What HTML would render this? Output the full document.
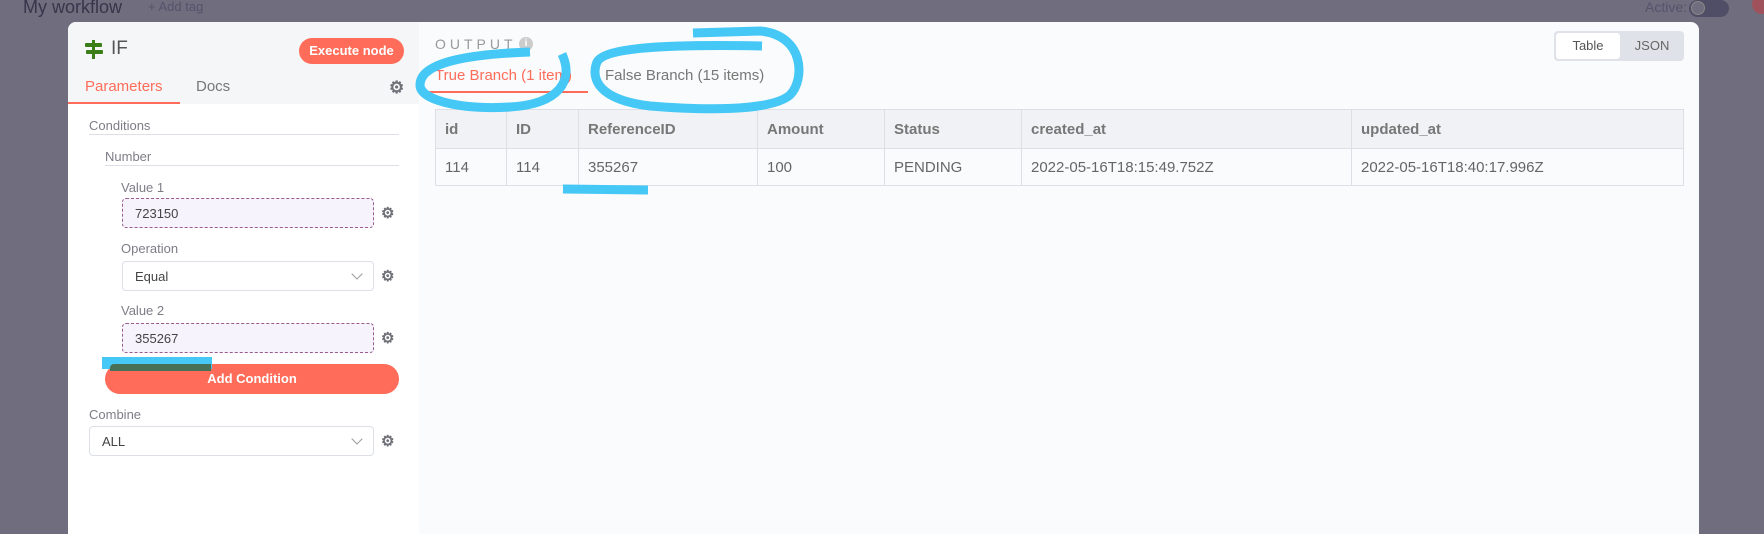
<!DOCTYPE html>
<html style="width:1764px;height:534px;overflow:hidden"><head><meta charset="utf-8"><style>
*{box-sizing:border-box;margin:0;padding:0}
body{width:1764px;height:534px;overflow:hidden;background:#706d7f;font-family:"Liberation Sans",sans-serif;position:relative;color:#555}
.a{position:absolute}
.lbl{position:absolute;font-size:13px;color:#7d7d87}
.inp{position:absolute;border:1px dashed #9a5c8c;background:#f6f3fd;border-radius:4px;font-size:13px;color:#444;padding:7px 12px}
.sel{position:absolute;border:1px solid #dcdfe6;background:#fff;border-radius:4px;font-size:13px;color:#444;padding:7px 12px}
.chev{position:absolute;right:12px;top:8px;width:8px;height:8px;border-right:1px solid #999;border-bottom:1px solid #999;transform:rotate(45deg)}
.gear{position:absolute;font-size:15px;color:#6f6f78;font-weight:bold}
table{border-collapse:collapse;font-size:15px}
td,th{border:1px solid #dcdfe6;padding:0 9px;text-align:left;color:#666}
th{background:#f1f2f5;height:39px;font-weight:bold;color:#777}
td{height:37px;background:#fafbfc}
</style></head><body>
<div class="a" style="left:23px;top:-3px;font-size:18px;color:#38354a">My workflow</div>
<div class="a" style="left:148px;top:-1px;font-size:13px;color:#55526a">+ Add tag</div>
<div class="a" style="left:1645px;top:-1px;font-size:14px;color:#55526a">Active:</div>
<div class="a" style="left:1689px;top:0;width:40px;height:17px;border-radius:9px;background:#4f4e66"></div>
<div class="a" style="left:1691px;top:1px;width:14px;height:14px;border-radius:7px;border:1px solid #888;background:#706d7f"></div>
<div class="a" style="left:1752px;top:-6px;width:20px;height:20px;border-radius:10px;background:#a0525c"></div>

<div class="a" style="left:68px;top:22px;width:1631px;height:512px;background:#fafbfc;border-radius:8px 8px 0 0;overflow:hidden">
  <div class="a" style="left:0;top:0;width:351px;height:512px;background:#fff"></div>
  <div class="a" style="left:0;top:0;width:351px;height:82px;background:#f5f6f8"></div>
</div>
<svg class="a" style="left:85px;top:40px" width="18" height="19"><rect x="7" y="0" width="3" height="19" fill="#3b7d16"/><rect x="0" y="3" width="17" height="4" rx="1" fill="#3b7d16"/><rect x="1" y="10" width="17" height="4" rx="1" fill="#3b7d16"/></svg>
<div class="a" style="left:111px;top:38px;font-size:19px;color:#555">IF</div>
<div class="a" style="left:299px;top:38px;width:105px;height:26px;border-radius:13px;background:#ff6d5a;color:#fff;font-weight:bold;font-size:13px;line-height:26px;text-align:center">Execute node</div>
<div class="a" style="left:85px;top:78px;font-size:15px;color:#ff6d5a">Parameters</div>
<div class="a" style="left:196px;top:78px;font-size:15px;color:#777">Docs</div>
<div class="a" style="left:68px;top:102px;width:112px;height:2px;background:#ff6d5a"></div>
<div class="gear" style="left:389px;top:78px;font-size:17px">⚙</div>
<div class="lbl" style="left:89px;top:118px">Conditions</div>
<div class="a" style="left:89px;top:134px;width:310px;height:1px;background:#dcdfe6"></div>
<div class="lbl" style="left:105px;top:149px">Number</div>
<div class="a" style="left:105px;top:165px;width:294px;height:1px;background:#dcdfe6"></div>
<div class="lbl" style="left:121px;top:180px">Value 1</div>
<div class="inp" style="left:122px;top:198px;width:252px;height:30px">723150</div>
<div class="gear" style="left:381px;top:204px">⚙</div>
<div class="lbl" style="left:121px;top:241px">Operation</div>
<div class="sel" style="left:122px;top:261px;width:252px;height:30px">Equal<div class="chev"></div></div>
<div class="gear" style="left:381px;top:267px">⚙</div>
<div class="lbl" style="left:121px;top:303px">Value 2</div>
<div class="inp" style="left:122px;top:323px;width:252px;height:30px">355267</div>
<div class="gear" style="left:381px;top:329px">⚙</div>
<div class="a" style="left:105px;top:364px;width:294px;height:30px;border-radius:15px;background:#ff6d5a;color:#fff;font-weight:bold;font-size:13px;line-height:30px;text-align:center">Add Condition</div>
<div class="a" style="left:102px;top:357px;width:110px;height:12px;background:#45c8f5"></div>
<div class="a" style="left:110px;top:364px;width:101px;height:7px;background:#477057;border-radius:4px 0 0 0"></div>
<div class="lbl" style="left:89px;top:407px">Combine</div>
<div class="sel" style="left:89px;top:426px;width:285px;height:30px">ALL<div class="chev"></div></div>
<div class="gear" style="left:381px;top:432px">⚙</div>

<div class="a" style="left:435px;top:36px;font-size:14px;letter-spacing:4px;color:#999">OUTPUT</div>
<div class="a" style="left:519px;top:37px;width:14px;height:14px;border-radius:7px;background:#ccc;color:#fff;font-size:10px;text-align:center;line-height:14px;font-weight:bold">i</div>
<div class="a" style="left:435px;top:67px;font-size:15px;color:#ff6d5a">True Branch (1 item)</div>
<div class="a" style="left:605px;top:67px;font-size:15px;color:#777">False Branch (15 items)</div>
<div class="a" style="left:418px;top:91px;width:170px;height:2px;background:#ff6d5a"></div>
<div class="a" style="left:1554px;top:31px;width:130px;height:30px;border-radius:4px;background:#dfe2e8"></div>
<div class="a" style="left:1556px;top:33px;width:64px;height:26px;border-radius:3px;background:#fff;font-size:13px;color:#555;text-align:center;line-height:26px">Table</div>
<div class="a" style="left:1620px;top:33px;width:64px;height:26px;font-size:13px;color:#666;text-align:center;line-height:26px">JSON</div>
<table class="a" style="left:435px;top:109px;width:1249px">
<tr><th style="width:71px">id</th><th style="width:72px">ID</th><th style="width:179px">ReferenceID</th><th style="width:127px">Amount</th><th style="width:137px">Status</th><th style="width:330px">created_at</th><th>updated_at</th></tr>
<tr><td>114</td><td>114</td><td>355267</td><td>100</td><td>PENDING</td><td>2022-05-16T18:15:49.752Z</td><td>2022-05-16T18:40:17.996Z</td></tr>
</table>
<svg class="a" style="left:0;top:0" width="1764" height="534" fill="none" stroke="#45c8f5" stroke-width="9" stroke-linecap="butt">
<path d="M562 54 C574 80 560 104 510 107 C460 110 420 100 420 85 C420 62 470 54 530 52"/>
<path d="M693 33 L760 31 C805 35 805 80 790 95 C770 112 700 110 650 106 C600 100 590 80 597 62 C605 48 660 44 762 46"/>
<path d="M563 189 L648 190"/>
</svg>
</body></html>
